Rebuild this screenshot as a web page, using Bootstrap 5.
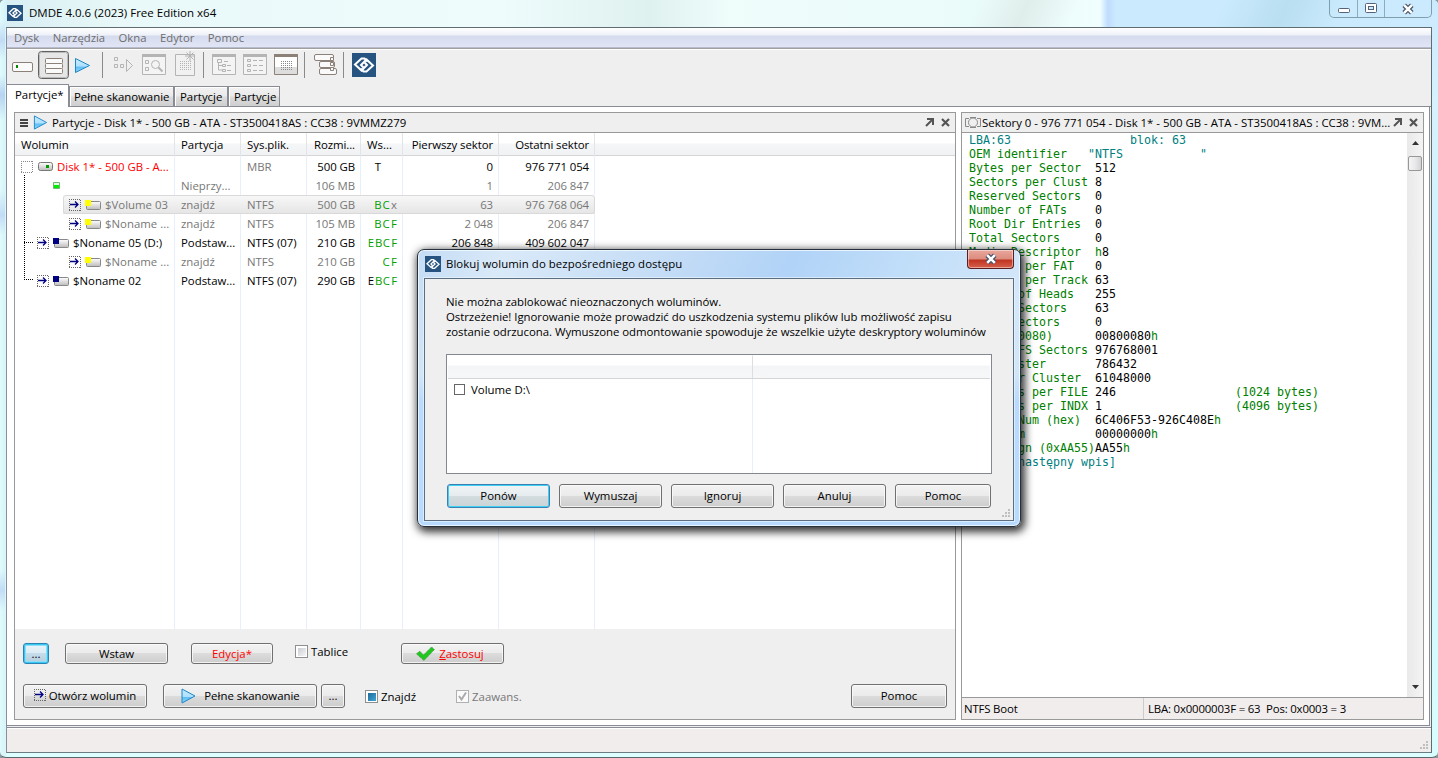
<!DOCTYPE html>
<html lang="pl">
<head>
<meta charset="utf-8">
<title>DMDE 4.0.6 (2023) Free Edition x64</title>
<link href="https://cdn.jsdelivr.net/npm/bootstrap@5.3.0/dist/css/bootstrap.min.css" rel="stylesheet">
<style>
body{width:1438px;height:758px;overflow:hidden;font:11.4px/15px "Open Sans","Noto Sans",sans-serif;color:#000;background:#8a9a9c}
svg{display:block;flex:none}
.window{width:1438px;height:758px;padding:0 6px 5px 7px;border-bottom:1px solid #56696a;border-radius:5px 5px 6px 6px;
 background:linear-gradient(transparent 20px,#c3dcf6 40px,transparent 60px,transparent 75px,#b6d3f2 95px,transparent 120px,transparent 190px,#c3dcf6 215px,transparent 235px,transparent 570px,#c3dcf6 590px,transparent 610px) 0 0/5px 100% no-repeat,
 linear-gradient(90deg,#e0fbfb 0,#d8f3fa 5px,transparent 7px) no-repeat,
 linear-gradient(#cbeafd,#d5f2fe 100px,#cdf5ff 400px,#d8feff) 100% 0/8px 100% no-repeat,
 linear-gradient(115deg,transparent 18%,#b9dff0 45%,transparent 70%) 1180px 0/230px 27px no-repeat,
 linear-gradient(115deg,transparent 20%,#e0eeeb 52%,transparent 85%) 950px 0/140px 27px no-repeat,
 linear-gradient(90deg,#d7eef3 0,#e9f8f8 120px,#eefcfc 500px,#dff1ef 650px,#effdfb 730px,#e9fbf9 1000px,#f0fffe 1100px,#bfdcff 1108px,#cbeafd 1116px) 0 0/100% 28px no-repeat,#dff}
.titlebar{height:27px;padding-bottom:1px}
.apptitle{font-size:11.5px;padding-left:6px;margin-top:-1px}
.winbtns{width:103px;height:18px;border:1px solid #7f9fae;border-top:0;border-radius:0 0 5px 5px}
.winbtns span{display:flex;align-items:center;justify-content:center;border-right:1px solid #8facba}
.winbtns span:last-child{border:0}
.client{height:726px;border:1px solid #5f6d72;border-left-color:#84919a;border-bottom-color:#6b7c80;background:#efefef;margin-left:-1px}
.menubar{height:20px;background:linear-gradient(#fff,#eef1f8 7px,#d5dbee 8px,#e1e5f6);border-bottom:1px solid #b6bccc;color:#6d6d6d;padding:2px 0 0 7px;font-size:11.3px}
.menubar span{margin-right:13.5px}
.toolbar{height:36px;border-top:1px solid #a0a0a0;box-shadow:inset 0 1px #fff}
.tabrow{height:23px;border-bottom:1px solid #898c95}
.wtab{height:20px;border:1px solid #898c95;border-bottom:0;background:linear-gradient(#f2f2f2,#eaeaea 9px,#dcdcdc 10px,#cfcfcf);padding:2px 0 0 4px;box-shadow:inset 1px 1px #fff}
.wtab.on{height:23px;background:#fff;border-left:0;padding:2px 0 0 8px;z-index:2;margin-bottom:-1px}
.page{height:619px;background:#fff;border-right:1px solid #898c95;border-bottom:1px solid #898c95;padding:5px 5px 5px 7px;gap:5px;margin-right:1px}
.pane{border:1px solid #999;background:#fff;flex-shrink:0}
.ptitle{height:20px;background:#efefef;border-bottom:1px solid #999}
.vgrid{display:grid;grid-template-columns:160px 66px 66px 54px 42px 96px 96px 1fr}
.vgrid .text-end{letter-spacing:-.08px}
.lhead{height:23px;background:linear-gradient(#fff,#fff 10px,#f5f6f8 11px,#f1f2f4);border-bottom:1px solid #d5d5d5;line-height:23px}
.lhead div{padding:0 6px;border-right:1px solid #e2e4e8}
.lhead div.text-end{padding-right:5px}
.lhead div:last-child{border:0}
.lbody{height:473px;padding-top:1px;background:linear-gradient(90deg,transparent 159px,#e6effa 159px,#e6effa 160px,transparent 160px,transparent 225px,#e6effa 225px,#e6effa 226px,transparent 226px,transparent 291px,#e6effa 291px,#e6effa 292px,transparent 292px,transparent 345px,#e6effa 345px,#e6effa 346px,transparent 346px,transparent 387px,#e6effa 387px,#e6effa 388px,transparent 388px,transparent 483px,#e6effa 483px,#e6effa 484px,transparent 484px,transparent 579px,#e6effa 579px,#e6effa 580px,transparent 580px)}
.vrow{height:19px;line-height:19px}
.vrow>div{padding:0 6px;white-space:nowrap}
.vrow>div:first-child{padding:0;display:flex;align-items:center}
.vrow svg[height="13"]{margin-top:2px}
.vrow .rd svg[height="13"]{margin-top:0}
.dim{color:#777}
.selrow{background:linear-gradient(#f8f8f8,#e5e5e5) 48px 0/532px 19px no-repeat}
.selbox{left:48px;top:38px;width:532px;height:19px;border:1px solid #d9d9d9;border-radius:3px}
.vrow>.fl{display:flex;justify-content:flex-end;color:#00a000;padding-right:5px}
.fl i{font-style:normal;width:8px;text-align:center}
.k{color:#000}.x{color:#777}.rd,.wb.rd{color:red}
.tree{left:9px;top:18px;width:9px;height:105px;border-left:1px dotted #000;border-bottom:1px dotted #000}
.tree2{left:9px;top:85px;width:9px;border-top:1px dotted #000}
.bbar{height:90px;background:#efefef;padding:14px 8px 0}
.wb{height:21px;border:1px solid #707070;border-radius:3px;background:linear-gradient(#f3f3f3,#ebebeb 48%,#dcdcdc 50%,#cdcdcd);box-shadow:inset 0 0 0 1px #fbfbfbcc;display:flex;align-items:center;justify-content:center;flex:none;padding:0;color:#000}
.tall{height:24px;padding-bottom:2px}
.wb.hot{border-color:#2c82b4;box-shadow:inset 0 0 0 1px #35c8f2,inset 0 0 0 2px #8fdcf7;background:linear-gradient(#eaf4fa,#dcebf4 48%,#c6dcea 50%,#b4cddc)}
.wb.def{border-color:#3c7fb1;box-shadow:inset 0 0 0 1px #3fd0f5;background:linear-gradient(#f0f4f5,#e6ecef 48%,#d3dcdf 50%,#cbd3d6)}
.w26{width:26px}.w103{width:103px}.w82{width:82px}.w124{width:124px}.w154{width:154px}.w24{width:24px}.w96{width:96px}
.cb{width:13px;height:13px;border:1px solid #8e8f8f;background:linear-gradient(135deg,#c9cdd2,#f6f6f6) content-box,#fff;padding:1.5px;flex:none}
.cb.mid{background:linear-gradient(135deg,#1f6a9a,#3fa6d6) content-box,#fff}
.cb.plain{background:#fff;border-color:#666;width:11px;height:11px}
.cb.off{border-color:#b0b0b0;background:#fafafa;padding:0}
pre.hex{font:11.63px/14px "DejaVu Sans Mono",monospace;color:#008000;margin:0;padding-left:7px;overflow:hidden}
pre.hex b{font-weight:400;color:#000}pre.hex u{text-decoration:none;color:#008080}
.sbar{width:16px;background:linear-gradient(90deg,#e9e9e9,#f4f4f4)}
.thumb{width:14px;height:15px;border:1px solid #979797;border-radius:2px;background:linear-gradient(90deg,#f5f5f5,#e9e9eb 50%,#d3d3d6);margin-top:11px}
.sline{height:22px;border-top:1px solid #999;background:#f1edec;line-height:21px;letter-spacing:-.17px}
.footer{height:25px;border-top:1px solid #898c95;margin-top:1px;background:#f1edec;box-shadow:inset 0 1px #fff}
.dlg{left:417px;top:249px;width:604px;height:278px;border:1px solid #26303c;border-radius:7px;padding:0 6px 6px;z-index:10;
 background:linear-gradient(#b7d7f900 45%,#b8dafe 55%),linear-gradient(115deg,#c4dcf5 0,#d9e9f8 12%,#c4dcf6 35%,#b1d3f7 52%,#c1def9 68%,#d4e7fb 85%,#c8e2f2);
 box-shadow:inset 0 0 0 1px #f4fbffcc,2px 3px 9px 2px #000c}
.dtitle{height:28px}
.dclose{width:47px;height:19px;border:1px solid #5b1d1d;border-top:0;border-radius:0 0 4px 4px;background:linear-gradient(#e9a79c,#dc8c7e 9px,#c03420 10px,#d5604b);box-shadow:inset 0 0 0 1px #ffffff70;align-self:flex-start;display:flex;align-items:center;justify-content:center}
.dbody{height:243px;border:1px solid #5c6f80;background:#efefef;padding:15px 21px 0;box-shadow:0 0 0 1px #e8f5ffb0}
.dtext{letter-spacing:-.035px}
.dlist{height:120px;border:1px solid #828790;background:linear-gradient(90deg,transparent 305px,#e6effa 305px,#e6effa 306px,transparent 306px),#fff;margin-top:15px}
.dlhead{height:23px;margin:1px 1px 0;background:linear-gradient(#fff 9px,#f4f5f7 10px,#f6f7f8);border-bottom:1px solid #d5d5d5}
.dlhead div{width:305px;height:22px;border-right:1px solid #dcdee2}
.grip{right:3px;bottom:2px}
</style>
</head>
<body>
<svg width="0" height="0" class="position-absolute">
<defs>
<linearGradient id="gd" x2="0" y2="1"><stop stop-color="#fff"/><stop offset="1" stop-color="#bbb"/></linearGradient>
<linearGradient id="gp" x2="0" y2="1"><stop stop-color="#c8ecff"/><stop offset=".55" stop-color="#aee0ff"/><stop offset=".6" stop-color="#5fbdf3"/><stop offset="1" stop-color="#8ed4fb"/></linearGradient>
<symbol id="logo" viewBox="0 0 24 24"><path fill="#265380" d="M0 0h24v24H0z"/><g fill="none" stroke="#fff" stroke-width="2"><path d="M15.500 8.500 12.500 5.500H9.500L3 11.500l6.500 6 5.500-5.500-2.500-2.500"/><path d="M8.500 15.500 11.500 18.500H14.500L21 12.500 14.500 6.500 9 12l2.500 2.500"/></g></symbol>
<symbol id="play" viewBox="0 0 16 16"><path d="M1.500 1 14.500 8 1.500 15z" fill="url(#gp)" stroke="#1e87c4"/></symbol>
<symbol id="arr" viewBox="0 0 12 12"><path d="M0 .5h12M0 11.500h12M.5 0v12M11.500 1v11" fill="none" stroke="#666" stroke-dasharray="1 1"/><path d="M1 5.500h8M6 2.500l3 3-3 3" fill="none" stroke="#000080" stroke-width="1.300"/></symbol>
<symbol id="vy" viewBox="0 0 16 10"><rect x="1.500" y="1.500" width="14" height="8" rx="1" fill="url(#gd)" stroke="#888"/><path d="M0 0h6v6H0z" fill="#ff0"/></symbol>
<symbol id="vb" viewBox="0 0 16 10"><rect x="1.500" y="1.500" width="14" height="8" rx="1" fill="url(#gd)" stroke="#888"/><path d="M0 0h6v6H0z" fill="#000080"/></symbol>
<symbol id="cx" viewBox="0 0 12 11"><path d="m2.500 2 7 7m0-7-7 7" stroke="#46536b" stroke-width="4.500"/><path d="m2.500 2 7 7m0-7-7 7" stroke="#fff" stroke-width="2.300"/></symbol>
<symbol id="out" viewBox="0 0 9 9"><path d="M2 1h6v6M8 1 1 8" fill="none" stroke="#555" stroke-width="2"/></symbol>
<symbol id="xx" viewBox="0 0 9 9"><path d="m1 1 7 7m0-7L1 8" stroke="#555" stroke-width="2.200"/></symbol>
<symbol id="gr" viewBox="0 0 9 9"><path d="M7 0h2v2H7zM4 3h2v2H4zM7 3h2v2H7zM1 6h2v2H1zM4 6h2v2H4zM7 6h2v2H7z" fill="#bfbfbf"/></symbol>
</defs></svg>

<div class="window position-relative">
 <header class="titlebar d-flex align-items-center">
  <svg width="16" height="16"><use href="#logo"/></svg><span class="apptitle">DMDE 4.0.6 (2023) Free Edition x64</span>
  <div class="winbtns ms-auto align-self-start d-flex">
   <span style="width:28px"><svg width="12" height="12"><rect x=".5" y="5.500" width="11" height="4" rx="1" fill="#fff" stroke="#56617a"/></svg></span>
   <span style="width:27px"><svg width="12" height="11"><rect x=".5" y=".5" width="11" height="9" rx="1" fill="#fff" stroke="#56617a"/><rect x="3.500" y="3.500" width="5" height="3" fill="#cfeafa" stroke="#56617a"/></svg></span>
   <span class="flex-fill"><svg width="14" height="12"><use href="#cx"/></svg></span>
  </div>
 </header>
 <div class="client">
  <nav class="menubar d-flex"><span>Dysk</span><span>Narzędzia</span><span>Okna</span><span>Edytor</span><span>Pomoc</span></nav>
  <div class="toolbar">
  <svg width="400" height="35" fill="none">
   <rect x="5.500" y="13.500" width="20" height="9" rx="1.500" fill="#fafafa" stroke="#8c8178"/><path d="M9 16h2v3H9z" fill="#080"/>
   <rect x="31.500" y="2.500" width="30" height="27" rx="3" fill="#e6e6e6" stroke="#626262"/><rect x="32.500" y="3.500" width="28" height="25" rx="2" stroke="#bbb"/>
   <g fill="#fafafa" stroke="#8c8178"><rect x="38.500" y="9.500" width="17" height="5" rx="1"/><rect x="38.500" y="14.500" width="17" height="5" rx="1"/><rect x="38.500" y="19.500" width="17" height="5" rx="1"/></g>
   <path d="M68.500 9.500v14l14-7z" fill="url(#gp)" stroke="#1e87c4"/>
   <path d="M95.500 3v26M196.500 3v26M297.500 3v26M336.500 3v26" stroke="#8a8a8a"/>
   <g stroke="#b4b4b4"><path d="M107.500 8.500h3v3h-3zM107.500 15.500h3v3h-3zM113.500 15.500h3v3h-3zM119.500 10.500v12l6-6z"/>
   <path d="M135.500 5.500h23v20h-23z" fill="#f4f4f4"/><path d="M135 6.500h24" stroke-width="3"/><path d="M138.500 11.500h3v3h-3zM138.500 18.500h3v3h-3z"/><circle cx="148.500" cy="15.500" r="4"/><path d="m151.500 18.500 4 4" stroke-width="2"/>
   <path d="M168.500 5.500h19v21h-19z" fill="#f1f1f1"/><path d="M173 12.500h12M173 14.500h12M173 16.500h12M173 18.500h12M173 20.500h12" stroke-dasharray="1 1"/><path d="M183 2v10M178 7h10M179.500 3.500l7 7M186.500 3.500l-7 7"/>
   <path d="M205.500 5.500h23v20h-23zM236.500 5.500h23v20h-23z" fill="#f4f4f4"/><path d="M205 6.500h24M236 6.500h24" stroke-width="3"/>
   <path d="M210.500 10.500h4v3h-4zM211.500 14v7h4M211.500 16.500h4M215.500 15.500h3v2h-3zM215.500 20.500h3v2h-3zM217 12.500h4M220 16.500h4M220 21.500h4M240.500 10.500h3v2h-3zM240.500 15.500h3v2h-3zM240.500 20.500h3v2h-3zM246 11.500h4m2 0h4M246 16.500h4m2 0h4M246 21.500h4m2 0h4"/></g>
   <path d="M267.500 5.500h23v20h-23z" fill="#fff" stroke="#8c8178"/><path d="M268 18h22v7h-22z" fill="#ddd"/><path d="M267 6.500h24" stroke="#8c8178" stroke-width="3"/><path d="M274 12.500h11M274 14.500h11M274 16.500h11M274 18.500h11M274 20.500h11" stroke="#888" stroke-dasharray="1 1"/>
   <g stroke="#8c8178" fill="#fafafa"><rect x="307.500" y="5.500" width="19" height="6" rx="1.500"/><rect x="312.500" y="12.500" width="15" height="6" rx="1.500"/><rect x="312.500" y="19.500" width="17" height="6" rx="1.500"/><path d="M323.500 8.500h3v3h-3zM323.500 13.500h3v3h-3zM323.500 18.500h3v3h-3z"/></g>
   <use href="#logo" x="345" y="4" width="24" height="24"/>
  </svg></div>
  <div class="tabrow d-flex align-items-end"><div class="wtab on position-relative" style="width:62px">Partycje*</div><div class="wtab" style="width:105px">Pełne skanowanie</div><div class="wtab" style="width:54px;padding-left:5px">Partycje</div><div class="wtab" style="width:52px;padding-left:5px">Partycje</div></div>
  <main class="page d-flex">
   <section class="pane" style="width:942px">
    <div class="ptitle d-flex align-items-center"><svg class="ms-1 me-1" width="11" height="10"><path d="M1 1h8v2H1zM1 4h8v2H1zM1 7h8v2H1z" fill="#444"/></svg><svg width="15" height="15" style="margin-left:-1px"><use href="#play"/></svg><span class="ps-1">Partycje - Disk 1* - 500 GB - ATA - ST3500418AS : CC38 : 9VMMZ279</span><svg class="ms-auto" style="margin-right:7px" width="9" height="9"><use href="#out"/></svg><svg style="margin-right:5px" width="9" height="9"><use href="#xx"/></svg></div>
    <div class="lhead vgrid"><div>Wolumin</div><div>Partycja</div><div>Sys.plik.</div><div class="text-end">Rozmi...</div><div>Ws...</div><div class="text-end">Pierwszy sektor</div><div class="text-end">Ostatni sektor</div><div></div></div>
    <div class="lbody">
     <div class="position-relative">
     <div class="vrow vgrid"><div class="rd"><svg width="42" height="13"><path d="M6 1.500h12M6 12.500h12M6.500 1v12M17.500 1v12" fill="none" stroke="#888" stroke-dasharray="1 1"/><rect x="23.500" y="2.500" width="14" height="8" rx="2" fill="url(#gd)" stroke="#777"/><path d="M31 5h3v3h-3z" fill="#090"/></svg>Disk 1* - 500 GB - A...</div><div></div><div class="dim">MBR</div><div class="text-end">500 GB</div><div class="fl"><i class="k">T</i><i></i><i></i></div><div class="text-end">0</div><div class="text-end">976 771 054</div></div>
     <div class="vrow vgrid dim"><div><svg width="50" height="11"><path d="M38.500 2.500h6v6h-6z" fill="#dfffdc" stroke="#76b276"/><path d="M39 5h5v3h-5z" fill="#0e0"/></svg></div><div>Nieprzy...</div><div></div><div class="text-end">106 MB</div><div></div><div class="text-end">1</div><div class="text-end">206 847</div></div>
     <div class="vrow vgrid dim selrow"><div><svg width="90" height="13"><use href="#arr" x="54" width="12" height="12"/><use href="#vy" x="70" y="1" width="16" height="10"/></svg>$Volume 03</div><div>znajdź</div><div>NTFS</div><div class="text-end">500 GB</div><div class="fl"><i>B</i><i>C</i><i class="x">x</i></div><div class="text-end">63</div><div class="text-end">976 768 064</div></div>
     <div class="vrow vgrid dim"><div><svg width="90" height="13"><use href="#arr" x="54" width="12" height="12"/><use href="#vy" x="70" y="1" width="16" height="10"/></svg>$Noname ...</div><div>znajdź</div><div>NTFS</div><div class="text-end">105 MB</div><div class="fl"><i>B</i><i>C</i><i>F</i></div><div class="text-end">2 048</div><div class="text-end">206 847</div></div>
     <div class="vrow vgrid"><div><svg width="58" height="13"><use href="#arr" x="22" width="12" height="12"/><use href="#vb" x="38" y="1" width="16" height="10"/></svg>$Noname 05 (D:)</div><div>Podstaw...</div><div>NTFS (07)</div><div class="text-end">210 GB</div><div class="fl"><i>E</i><i>B</i><i>C</i><i>F</i></div><div class="text-end">206 848</div><div class="text-end">409 602 047</div></div>
     <div class="vrow vgrid dim"><div><svg width="90" height="13"><use href="#arr" x="54" width="12" height="12"/><use href="#vy" x="70" y="1" width="16" height="10"/></svg>$Noname ...</div><div>znajdź</div><div>NTFS</div><div class="text-end">210 GB</div><div class="fl"><i>C</i><i>F</i></div><div></div><div></div></div>
     <div class="vrow vgrid"><div><svg width="58" height="13"><use href="#arr" x="22" width="12" height="12"/><use href="#vb" x="38" y="1" width="16" height="10"/></svg>$Noname 02</div><div>Podstaw...</div><div>NTFS (07)</div><div class="text-end">290 GB</div><div class="fl"><i class="k">E</i><i>B</i><i>C</i><i>F</i></div><div></div><div></div></div>
     <div class="selbox position-absolute"></div><div class="tree position-absolute"></div><div class="tree2 position-absolute"></div>
     </div>
    </div>
    <div class="bbar">
     <div class="d-flex mb-3" style="height:25px"><button class="wb hot w26">...</button><button class="wb w103" style="margin-left:16px">Wstaw</button><button class="wb w82 rd" style="margin-left:23px">Edycja*</button><span class="cb" style="margin:2px 3px 0 22px"></span><span style="padding-top:1px;width:90px">Tablice</span><button class="wb w103 rd"><svg width="20" height="16" style="margin-right:4px;margin-left:-6px"><path d="m1.500 8 3-3 4 4 8-8 3 2.500L9 14.500z" fill="#1ec81e" stroke="#5b8a4f" stroke-dasharray="1 1"/></svg><span><u>Z</u>astosuj</span></button></div>
     <div class="d-flex align-items-center"><button class="wb tall w124"><svg width="12" height="12" style="margin-right:3px"><use href="#arr"/></svg>Otwórz wolumin</button><button class="wb tall w154" style="margin-left:16px"><svg width="17" height="16" style="margin:2px 7px 0 0"><use href="#play"/></svg>Pełne skanowanie</button><button class="wb tall w24" style="margin-left:4px">...</button><span class="cb mid" style="margin:1px 3px 0 20px"></span><span>Znajdź</span><span class="cb off" style="margin:1px 3px 0 40px"><svg width="11" height="11"><path d="m2 5 2.500 3.500L9 1.500" fill="none" stroke="#aaa" stroke-width="2"/></svg></span><span class="dim">Zaawans.</span><button class="wb tall w96 ms-auto">Pomoc</button></div>
    </div>
   </section>
   <section class="pane d-flex flex-column" style="width:463px">
    <div class="ptitle d-flex align-items-center flex-shrink-0"><svg style="margin:0 1px 0 3px" width="16" height="13" fill="none" stroke="#888"><circle cx="8" cy="6.500" r="4.500"/><path d="M5 1.500h6M5 11.500h6M4 2.500H.5v8H4M12 2.500h3.500v8H12"/></svg><span>Sektory 0 - 976 771 054 - Disk 1* - 500 GB - ATA - ST3500418AS : CC38 : 9VM...</span><svg class="ms-auto" style="margin-right:7px" width="9" height="9"><use href="#out"/></svg><svg style="margin-right:5px" width="9" height="9"><use href="#xx"/></svg></div>
    <div class="d-flex flex-fill" style="min-height:0">
<pre class="hex flex-fill"><u>LBA:63                 blok: 63</u>
OEM identifier   <u>"NTFS           "</u>
Bytes per Sector  <b>512</b>
Sectors per Clust <b>8</b>
Reserved Sectors  <b>0</b>
Number of FATs    <b>0</b>
Root Dir Entries  <b>0</b>
Total Sectors     <b>0</b>
Media Descriptor  h<b>8</b>
        per FAT   <b>0</b>
        per Track <b>63</b>
       of Heads   <b>255</b>
       Sectors    <b>63</b>
       ectors     <b>0</b>
       0080)      <b>00800080</b>h
       FS Sectors <b>976768001</b>
       ster       <b>786432</b>
       r Cluster  <b>61048000</b>
       s per FILE <b>246</b>                 (1024 bytes)
       s per INDX <b>1</b>                   (4096 bytes)
       Num (hex)  <b>6C406F53-926C408E</b>h
       m          <b>00000000</b>h
       gn (0xAA55)<b>AA55</b>h
<u>       następny wpis]</u></pre>
     <div class="sbar d-flex flex-column align-items-center"><svg class="mt-2" width="7" height="4"><path d="M3.500 0 7 4H0z" fill="#333"/></svg><div class="thumb"></div><svg class="mt-auto" style="margin-bottom:8px" width="7" height="4"><path d="M0 0h7L3.500 4z" fill="#333"/></svg></div>
    </div>
    <div class="sline d-flex flex-shrink-0"><span style="width:182px;padding-left:2px;border-right:1px solid #cfcbca">NTFS Boot</span><span style="padding-left:4px;white-space:pre">LBA: 0x0000003F = 63  Pos: 0x0003 = 3</span></div>
   </section>
  </main>
  <footer class="footer position-relative"><svg class="grip position-absolute" width="9" height="9"><use href="#gr"/></svg></footer>
 </div>

 <div class="dlg position-absolute" role="dialog">
  <div class="dtitle d-flex align-items-center"><svg width="16" height="16" style="margin:0 5px 0 1px"><use href="#logo"/></svg><span style="margin-top:-2px;letter-spacing:.07px">Blokuj wolumin do bezpośredniego dostępu</span><div class="dclose ms-auto"><svg width="14" height="12"><use href="#cx"/></svg></div></div>
  <div class="dbody position-relative">
   <div class="dtext text-nowrap">Nie można zablokować nieoznaczonych woluminów.<br>Ostrzeżenie! Ignorowanie może prowadzić do uszkodzenia systemu plików lub możliwość zapisu<br>zostanie odrzucona. Wymuszone odmontowanie spowoduje że wszelkie użyte deskryptory woluminów</div>
   <div class="dlist"><div class="dlhead"><div></div></div><div class="d-flex align-items-center" style="padding:3px 0 0 7px;gap:6px"><span class="cb plain"></span>Volume D:\</div></div>
   <div class="d-flex" style="margin:10px 0 0 1px;gap:9px"><button class="wb tall def w103">Ponów</button><button class="wb tall w103">Wymuszaj</button><button class="wb tall w103">Ignoruj</button><button class="wb tall w103">Anuluj</button><button class="wb tall w96">Pomoc</button></div>
   <svg class="grip position-absolute" width="9" height="9"><use href="#gr"/></svg>
  </div>
 </div>
</div>
<script src="https://cdn.jsdelivr.net/npm/bootstrap@5.3.0/dist/js/bootstrap.bundle.min.js"></script>
</body>
</html>
